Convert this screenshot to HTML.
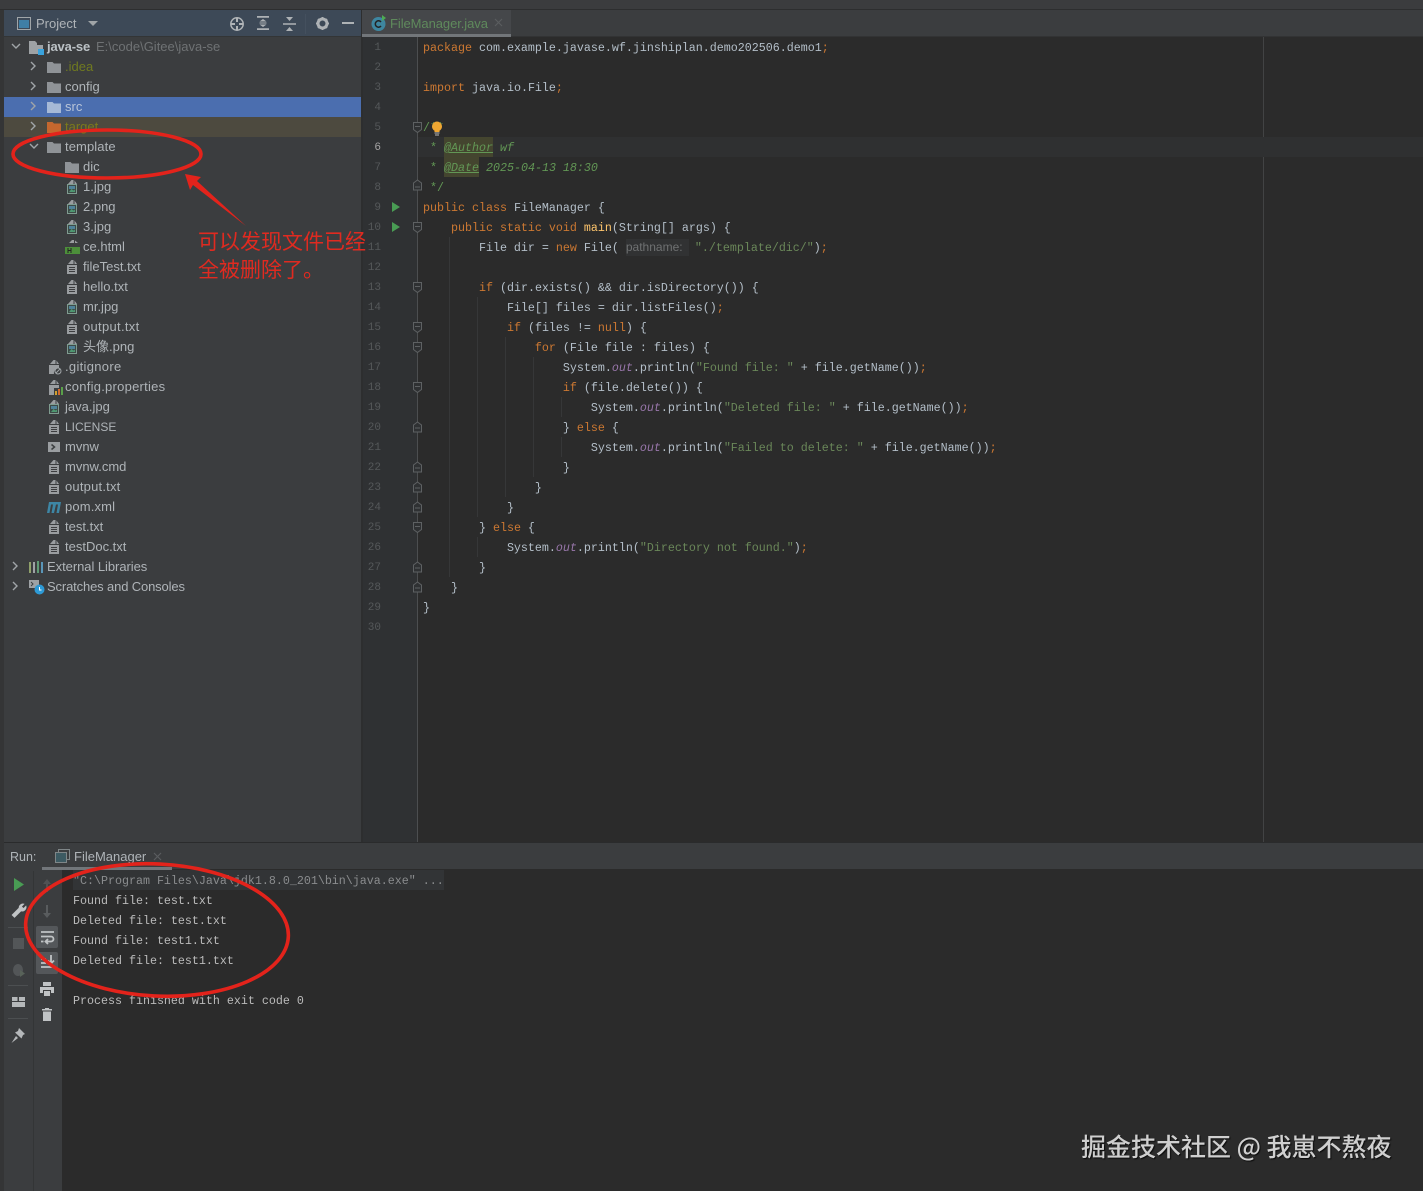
<!DOCTYPE html>
<html><head><meta charset="utf-8"><style>
html,body{margin:0;padding:0;background:#2b2b2b}
#r{position:relative;width:1423px;height:1191px;overflow:hidden;background:#2b2b2b}
.a{position:absolute}
.t{position:absolute;font:13px/20px "Liberation Sans","Noto Sans CJK SC",sans-serif;color:#afb4b8;white-space:pre;height:20px}
.c{position:absolute;left:423px;margin-top:1px;font:11.67px/20px "Liberation Mono",monospace;color:#b4bfc9;white-space:pre;height:20px}
.n{position:absolute;left:363px;margin-top:1px;width:18px;text-align:right;font:11px/20px "Liberation Mono",monospace;color:#55585a;height:20px}
.o{position:absolute;left:73px;margin-top:1px;font:11.67px/20px "Liberation Mono",monospace;color:#bbbbbb;white-space:pre;height:20px}
i{font-style:italic}
.k{color:#cc7832}.s{color:#6a8759}.d{color:#629755}.f{color:#9876aa;font-style:italic}.m{color:#ffc66d}
.g{position:absolute;width:1px;background:#363738}
svg{position:absolute;overflow:visible}
</style></head><body><div id="r">
<svg width="0" height="0" style="left:0;top:0"><defs>
<symbol id="fo" viewBox="0 0 14 12"><path d="M0 1h5.500l1.500 1.500H14V12H0z" fill="#8f9397"/></symbol>
<symbol id="fi" viewBox="0 0 10 14"><path d="M1 4L4.500 0H6.500V4zM7.500 .5L10 4H7.500zM0 5h10v9H0z" fill="#9a9da0"/><path d="M2 7.500h6M2 9.500h6M2 11.500h6" stroke="#3c3d3f" stroke-width="1"/></symbol>
<symbol id="im" viewBox="0 0 10 14"><path d="M1 4L4.500 0H6.500V4zM7.500 .5L10 4H7.500z" fill="#9a9da0"/><rect x=".5" y="4.500" width="9" height="9" fill="#3d4a47" stroke="#7f9c90"/><rect x="2" y="6" width="6" height="3" fill="#4f8299"/><path d="M2 12l2.500-3 2 1.500L8 9.500V12z" fill="#4f9a72"/></symbol>
</defs></svg>

<!-- chrome -->
<div class="a" style="left:0;top:0;width:1423px;height:9px;background:#3b3c3e"></div>
<div class="a" style="left:0;top:9px;width:1423px;height:1px;background:#2d2e2f"></div>
<div class="a" style="left:0;top:10px;width:4px;height:1181px;background:#343536"></div>
<div class="a" style="left:4px;top:10px;width:357px;height:832px;background:#3b3d3f"></div>
<div class="a" style="left:4px;top:10px;width:357px;height:26px;background:#3d4957"></div>
<div class="a" style="left:361px;top:10px;width:2px;height:832px;background:#2d2e2f"></div>
<div class="a" style="left:363px;top:10px;width:1060px;height:27px;background:#3b3d3f"></div>
<div class="a" style="left:4px;top:36px;width:357px;height:1px;background:#333536"></div>
<div class="a" style="left:363px;top:36px;width:1060px;height:1px;background:#323334"></div>
<div class="a" style="left:363px;top:37px;width:54px;height:805px;background:#2f3133"></div>
<div class="a" style="left:417px;top:37px;width:1px;height:805px;background:#4c4e50"></div>
<div class="a" style="left:1263px;top:37px;width:1px;height:805px;background:#424344"></div>
<div class="a" style="left:418px;top:137px;width:1005px;height:20px;background:#2f3031"></div>

<!-- project header -->
<svg style="left:17px;top:17px" width="14" height="13"><rect x=".5" y=".5" width="13" height="12" fill="none" stroke="#a0a5a8"/><rect x="2" y="3" width="10" height="8" fill="#3f7fa6"/></svg>
<div class="t" style="left:36px;top:14px">Project</div>
<svg style="left:88px;top:21px" width="10" height="6"><path d="M0 0h10L5 5z" fill="#a0a5a8"/></svg>
<svg style="left:230px;top:17px" width="14" height="14" fill="none" stroke="#b0b4b7" stroke-width="1.500"><circle cx="7" cy="7" r="6.200"/><path d="M7 1v4M7 9v4M1 7h4M9 7h4" stroke-width="2"/></svg>
<svg style="left:257px;top:16px" width="12" height="14" fill="#aeb2b5"><path d="M0 0h12v1.800H0zM0 12.200h12V14H0zM2.500 5.500L6 3l3.500 2.500zM2.500 8.500L6 11l3.500-2.500zM2.500 6.500h7v1h-7z"/></svg>
<svg style="left:283px;top:17px" width="13" height="14" fill="#aeb2b5"><path d="M0 6.300h13v1.500H0zM3 0h7L6.500 4zM3 14h7L6.500 10z"/></svg>
<div class="a" style="left:305px;top:14px;width:1px;height:20px;background:#44505e"></div>
<svg style="left:316px;top:17px" width="13" height="13"><circle cx="6.500" cy="6.500" r="4.500" fill="none" stroke="#aeb2b5" stroke-width="3"/><path d="M6.500 0v13M0 6.500h13M2 2l9 9M11 2l-9 9" stroke="#aeb2b5" stroke-width="1.800" stroke-dasharray="2 9"/></svg>
<div class="a" style="left:342px;top:22px;width:12px;height:2px;background:#aeb2b5"></div>

<!-- selection rows -->
<div class="a" style="left:4px;top:97px;width:357px;height:20px;background:#4b6eaf"></div>
<div class="a" style="left:4px;top:117px;width:357px;height:20px;background:#4d4a3f"></div>

<!-- tree arrows -->
<svg style="left:0;top:0" width="60" height="600" fill="none" stroke="#a0a5a8" stroke-width="1.400">
<path d="M12 44l4 4 4-4M31 62l4 4-4 4M31 82l4 4-4 4M31 102l4 4-4 4M31 122l4 4-4 4M30 144l4 4 4-4M13 562l4 4-4 4M13 582l4 4-4 4"/>
</svg>

<!-- tree icons -->
<svg style="left:29px;top:41px" width="16" height="14"><path d="M0 0h6l2 2v2h6v9H0z" fill="#9ea2a5"/><rect x="9" y="8" width="6" height="6" fill="#3aa3dd"/></svg>
<svg style="left:47px;top:61px" width="14" height="12"><use href="#fo"/></svg>
<svg style="left:47px;top:81px" width="14" height="12"><use href="#fo"/></svg>
<svg style="left:47px;top:101px" width="14" height="12"><path d="M0 1h5.500L7 2.500H14V12H0z" fill="#a6b9d6"/></svg>
<svg style="left:47px;top:121px" width="14" height="12"><path d="M0 1h5.500L7 2.500H14V12H0z" fill="#c4672e"/></svg>
<svg style="left:47px;top:141px" width="14" height="12"><use href="#fo"/></svg>
<svg style="left:65px;top:161px" width="14" height="12"><use href="#fo"/></svg>
<svg style="left:67px;top:180px" width="10" height="14"><use href="#im"/></svg>
<svg style="left:67px;top:200px" width="10" height="14"><use href="#im"/></svg>
<svg style="left:67px;top:220px" width="10" height="14"><use href="#im"/></svg>
<svg style="left:65px;top:240px" width="15" height="14"><path d="M4 3L7 0h2v3zM10 .5L13 3h-3z" fill="#9a9da0"/><rect y="7" width="15" height="7" fill="#4c8f3a"/><path d="M3 8v5M6 8v5M3 10.500h3" stroke="#222" stroke-width="1"/></svg>
<svg style="left:67px;top:260px" width="10" height="14"><use href="#fi"/></svg>
<svg style="left:67px;top:280px" width="10" height="14"><use href="#fi"/></svg>
<svg style="left:67px;top:300px" width="10" height="14"><use href="#im"/></svg>
<svg style="left:67px;top:320px" width="10" height="14"><use href="#fi"/></svg>
<svg style="left:67px;top:340px" width="10" height="14"><use href="#im"/></svg>
<svg style="left:49px;top:360px" width="13" height="15"><path d="M1 4L4.500 0H6.500V4zM7.500 .5L10 4H7.500zM0 5h10v3a5 5 0 0 0-5 6H0z" fill="#9a9da0"/><circle cx="9" cy="11" r="3" fill="none" stroke="#a0a5a8"/><path d="M7 13l4-4" stroke="#a0a5a8"/></svg>
<svg style="left:49px;top:380px" width="14" height="15"><path d="M1 4L4.500 0H6.500V4zM7.500 .5L10 4H7.500zM0 5h10v3H5v7H0z" fill="#9a9da0"/><rect x="6" y="11" width="2" height="4" fill="#d0a030"/><rect x="9" y="9" width="2" height="6" fill="#d06a30"/><rect x="12" y="7" width="2" height="8" fill="#5aa04a"/></svg>
<svg style="left:49px;top:400px" width="10" height="14"><use href="#im"/></svg>
<svg style="left:49px;top:420px" width="10" height="14"><use href="#fi"/></svg>
<svg style="left:48px;top:441px" width="12" height="12"><rect width="12" height="10" y="1" fill="#9a9ea1"/><path d="M3.500 3.500l3 2.500-3 2.500" fill="none" stroke="#3c3f41" stroke-width="1.500"/></svg>
<svg style="left:49px;top:460px" width="10" height="14"><use href="#fi"/></svg>
<svg style="left:49px;top:480px" width="10" height="14"><use href="#fi"/></svg>
<svg style="left:47px;top:501px" width="15" height="12"><path d="M2 1h12l-2 11h-2.500l1.500-8.500h-2L7 12H4.500L6 3.500H4L2.500 12H0z" fill="#3d86a5"/></svg>
<svg style="left:49px;top:520px" width="10" height="14"><use href="#fi"/></svg>
<svg style="left:49px;top:540px" width="10" height="14"><use href="#fi"/></svg>
<svg style="left:29px;top:561px" width="15" height="12"><path d="M0 1h2v11H0z" fill="#8fa06a"/><path d="M4 1h2v11H4z" fill="#9ea2a5"/><path d="M8 0h2v12H8z" fill="#5f9a74"/><path d="M12 1h2v11h-2z" fill="#5a96b8"/></svg>
<svg style="left:29px;top:580px" width="16" height="15"><rect width="10" height="8" fill="#9ea2a5"/><path d="M2 2l2 2-2 2" stroke="#3c3f41" fill="none"/><circle cx="10.500" cy="9.500" r="5" fill="#2d9ad6"/><path d="M10.500 7v3h2" stroke="#fff" fill="none"/></svg>

<!-- tree text -->
<div class="t" style="left:47px;top:37px;font-weight:bold;color:#bcc2c6;letter-spacing:-.15px">java-se</div>
<div class="t" style="left:96px;top:37px;color:#6f7274">E:\code\Gitee\java-se</div>
<div class="t" style="left:65px;top:57px;color:#707a20">.idea</div>
<div class="t" style="left:65px;top:77px">config</div>
<div class="t" style="left:65px;top:97px;color:#b7c4d8">src</div>
<div class="t" style="left:65px;top:117px;color:#7b7a1c">target</div>
<div class="t" style="left:65px;top:137px;letter-spacing:.1px">template</div>
<div class="t" style="left:83px;top:157px">dic</div>
<div class="t" style="left:83px;top:177px">1.jpg</div>
<div class="t" style="left:83px;top:197px">2.png</div>
<div class="t" style="left:83px;top:217px">3.jpg</div>
<div class="t" style="left:83px;top:237px">ce.html</div>
<div class="t" style="left:83px;top:257px">fileTest.txt</div>
<div class="t" style="left:83px;top:277px">hello.txt</div>
<div class="t" style="left:83px;top:297px">mr.jpg</div>
<div class="t" style="left:83px;top:317px;letter-spacing:.3px">output.txt</div>
<div class="t" style="left:83px;top:337px">头像.png</div>
<div class="t" style="left:65px;top:357px;letter-spacing:.3px">.gitignore</div>
<div class="t" style="left:65px;top:377px;letter-spacing:.25px">config.properties</div>
<div class="t" style="left:65px;top:397px">java.jpg</div>
<div class="t" style="left:65px;top:417px;font-size:12px">LICENSE</div>
<div class="t" style="left:65px;top:437px">mvnw</div>
<div class="t" style="left:65px;top:457px">mvnw.cmd</div>
<div class="t" style="left:65px;top:477px;letter-spacing:.2px">output.txt</div>
<div class="t" style="left:65px;top:497px;letter-spacing:.15px">pom.xml</div>
<div class="t" style="left:65px;top:517px">test.txt</div>
<div class="t" style="left:65px;top:537px">testDoc.txt</div>
<div class="t" style="left:47px;top:557px;letter-spacing:-.05px">External Libraries</div>
<div class="t" style="left:47px;top:577px;letter-spacing:-.14px">Scratches and Consoles</div>

<!-- editor tab -->
<div class="a" style="left:362px;top:10px;width:149px;height:27px;background:#45474a"></div>
<div class="a" style="left:362px;top:34px;width:149px;height:3px;background:#72767a"></div>
<svg style="left:371px;top:15px" width="16" height="16"><circle cx="7.500" cy="9" r="7" fill="#3e86a0"/><path d="M10 7a3.200 3.200 0 1 0 0 4" fill="none" stroke="#222" stroke-width="1.500"/><path d="M11 0l4 3-4 3z" fill="#4eab52"/></svg>
<div class="t" style="left:390px;top:14px;color:#5f8a5c;letter-spacing:-.07px">FileManager.java</div>
<svg style="left:495px;top:19px" width="7" height="7"><path d="M0 0l7 7M7 0L0 7" stroke="#5a5d5f" stroke-width="1.200"/></svg>

<!-- indent guides -->
<div class="g" style="left:449px;top:237px;height:340px"></div>
<div class="g" style="left:477px;top:297px;height:220px"></div>
<div class="g" style="left:477px;top:537px;height:20px"></div>
<div class="g" style="left:505px;top:337px;height:160px"></div>
<div class="g" style="left:533px;top:357px;height:120px"></div>
<div class="g" style="left:561px;top:397px;height:20px"></div>
<div class="g" style="left:561px;top:437px;height:20px"></div>

<!-- line numbers -->
<div class="n" style="top:37px">1</div><div class="n" style="top:57px">2</div><div class="n" style="top:77px">3</div><div class="n" style="top:97px">4</div><div class="n" style="top:117px">5</div><div class="n" style="top:137px;color:#a4a3a3">6</div><div class="n" style="top:157px">7</div><div class="n" style="top:177px">8</div><div class="n" style="top:197px">9</div><div class="n" style="top:217px">10</div><div class="n" style="top:237px">11</div><div class="n" style="top:257px">12</div><div class="n" style="top:277px">13</div><div class="n" style="top:297px">14</div><div class="n" style="top:317px">15</div><div class="n" style="top:337px">16</div><div class="n" style="top:357px">17</div><div class="n" style="top:377px">18</div><div class="n" style="top:397px">19</div><div class="n" style="top:417px">20</div><div class="n" style="top:437px">21</div><div class="n" style="top:457px">22</div><div class="n" style="top:477px">23</div><div class="n" style="top:497px">24</div><div class="n" style="top:517px">25</div><div class="n" style="top:537px">26</div><div class="n" style="top:557px">27</div><div class="n" style="top:577px">28</div><div class="n" style="top:597px">29</div><div class="n" style="top:617px">30</div>

<!-- run markers -->
<svg style="left:392px;top:202px" width="8" height="10"><path d="M0 0l8 5-8 5z" fill="#499c54"/></svg>
<svg style="left:392px;top:222px" width="8" height="10"><path d="M0 0l8 5-8 5z" fill="#499c54"/></svg>

<!-- fold markers -->
<svg style="left:413px;top:0" width="9" height="620" fill="#2f3133" stroke="#5e6163" stroke-width="1">
<path d="M.5 122.500h8v7l-4 3-4-3zM2 126.500h5"/><path d="M.5 190v-7l4-3 4 3v7zM2 187h5"/>
<path d="M.5 222.500h8v7l-4 3-4-3zM2 226.500h5"/>
<path d="M.5 282.500h8v7l-4 3-4-3zM2 286.500h5"/>
<path d="M.5 322.500h8v7l-4 3-4-3zM2 326.500h5"/>
<path d="M.5 342.500h8v7l-4 3-4-3zM2 346.500h5"/>
<path d="M.5 382.500h8v7l-4 3-4-3zM2 386.500h5"/>
<path d="M.5 432v-7l4-3 4 3v7zM2 428h5"/>
<path d="M.5 472v-7l4-3 4 3v7zM2 468h5"/>
<path d="M.5 492v-7l4-3 4 3v7zM2 488h5"/>
<path d="M.5 512v-7l4-3 4 3v7zM2 508h5"/>
<path d="M.5 522.500h8v7l-4 3-4-3zM2 526.500h5"/>
<path d="M.5 572v-7l4-3 4 3v7zM2 568h5"/>
<path d="M.5 592v-7l4-3 4 3v7zM2 588h5"/>
</svg>

<!-- doc highlights -->
<div class="a" style="left:444px;top:137px;width:49px;height:20px;background:#44452f"></div>
<div class="a" style="left:444px;top:157px;width:35px;height:20px;background:#44452f"></div>
<div class="a" style="left:626px;top:239px;width:63px;height:17px;background:#313233"></div>

<!-- code -->
<div class="c" style="top:37px"><span class="k">package</span> com.example.javase.wf.jinshiplan.demo202506.demo1<span class="k">;</span></div>
<div class="c" style="top:77px"><span class="k">import</span> java.io.File<span class="k">;</span></div>
<div class="c" style="top:117px;color:#629755">/**</div>
<div class="c d" style="top:137px"> * <i style="text-decoration:underline">@Author</i> <i>wf</i></div>
<div class="c d" style="top:157px"> * <i style="text-decoration:underline">@Date</i> <i>2025-04-13 18:30</i></div>
<div class="c d" style="top:177px"> */</div>
<div class="c" style="top:197px"><span class="k">public class</span> FileManager {</div>
<div class="c" style="top:217px">    <span class="k">public static void</span> <span class="m">main</span>(String[] args) {</div>
<div class="c" style="top:237px">        File dir = <span class="k">new</span> File( <span style="display:inline-block;width:62px;vertical-align:top;line-height:19px;color:#6f7172;font-family:'Liberation Sans',sans-serif;font-size:12px">pathname:</span> <span class="s">"./template/dic/"</span>)<span class="k">;</span></div>
<div class="c" style="top:277px">        <span class="k">if</span> (dir.exists() &amp;&amp; dir.isDirectory()) {</div>
<div class="c" style="top:297px">            File[] files = dir.listFiles()<span class="k">;</span></div>
<div class="c" style="top:317px">            <span class="k">if</span> (files != <span class="k">null</span>) {</div>
<div class="c" style="top:337px">                <span class="k">for</span> (File file : files) {</div>
<div class="c" style="top:357px">                    System.<span class="f">out</span>.println(<span class="s">"Found file: "</span> + file.getName())<span class="k">;</span></div>
<div class="c" style="top:377px">                    <span class="k">if</span> (file.delete()) {</div>
<div class="c" style="top:397px">                        System.<span class="f">out</span>.println(<span class="s">"Deleted file: "</span> + file.getName())<span class="k">;</span></div>
<div class="c" style="top:417px">                    } <span class="k">else</span> {</div>
<div class="c" style="top:437px">                        System.<span class="f">out</span>.println(<span class="s">"Failed to delete: "</span> + file.getName())<span class="k">;</span></div>
<div class="c" style="top:457px">                    }</div>
<div class="c" style="top:477px">                }</div>
<div class="c" style="top:497px">            }</div>
<div class="c" style="top:517px">        } <span class="k">else</span> {</div>
<div class="c" style="top:537px">            System.<span class="f">out</span>.println(<span class="s">"Directory not found."</span>)<span class="k">;</span></div>
<div class="c" style="top:557px">        }</div>
<div class="c" style="top:577px">    }</div>
<div class="c" style="top:597px">}</div>

<!-- bulb -->
<svg style="left:431px;top:121px" width="12" height="15"><circle cx="6" cy="5.500" r="5" fill="#f0a732"/><path d="M3.500 9h5v2h-5z" fill="#f0a732"/><path d="M3.500 12h5M4 14h4" stroke="#bbb" stroke-width="1"/></svg>

<!-- run panel -->
<div class="a" style="left:4px;top:842px;width:1419px;height:1px;background:#2a2b2c"></div>
<div class="a" style="left:4px;top:843px;width:1419px;height:26px;background:#3b3d3f"></div>
<div class="a" style="left:4px;top:869px;width:58px;height:322px;background:#3b3d3f"></div>
<div class="a" style="left:33px;top:871px;width:1px;height:320px;background:#333536"></div>
<div class="a" style="left:62px;top:869px;width:1361px;height:322px;background:#2b2b2b"></div>
<div class="t" style="left:10px;top:847px;font-size:12.500px">Run:</div>
<svg style="left:55px;top:849px" width="15" height="14" fill="none"><rect x="3.500" y=".5" width="11" height="10" stroke="#7f8688"/><rect x=".5" y="3.500" width="11" height="10" fill="#3c5a62" stroke="#7f8688"/></svg>
<div class="t" style="left:74px;top:847px">FileManager</div>
<svg style="left:154px;top:853px" width="7" height="7"><path d="M0 0l7 7M7 0L0 7" stroke="#5a5d5f" stroke-width="1.200"/></svg>
<div class="a" style="left:42px;top:867px;width:130px;height:3px;background:#72767a"></div>

<!-- run toolbar -->
<svg style="left:14px;top:878px" width="10" height="13"><path d="M0 0l10 6.500L0 13z" fill="#499c54"/></svg>
<svg style="left:11px;top:903px" width="15" height="15"><path d="M1 12l7-7a4 4 0 0 1 5-4l-2.500 2.500 2 2L15 3a4 4 0 0 1-5 5l-6.500 6.500z" fill="#c0c3c5" stroke="#c0c3c5" stroke-width=".6"/></svg>
<div class="a" style="left:8px;top:927px;width:20px;height:1px;background:#4c4f51"></div>
<div class="a" style="left:13px;top:938px;width:11px;height:11px;background:#535658"></div>
<svg style="left:11px;top:962px" width="16" height="15"><ellipse cx="7" cy="8" rx="5" ry="6" fill="#535658"/><path d="M9 8l5 3.500L9 15z" fill="#586259"/></svg>
<div class="a" style="left:8px;top:985px;width:20px;height:1px;background:#4c4f51"></div>
<svg style="left:12px;top:997px" width="13" height="10" fill="#b5b8ba"><path d="M0 0h5.500v4H0zM7 0h6v4H7zM0 5h13v5H0z"/></svg>
<div class="a" style="left:8px;top:1018px;width:20px;height:1px;background:#4c4f51"></div>
<svg style="left:11px;top:1028px" width="14" height="15"><path d="M8 0l6 6-2 1-1.500 3.500L4 4.500 7 3zM5 8l2 2-6.500 5z" fill="#b5b8ba"/></svg>

<svg style="left:42px;top:879px" width="10" height="13"><path d="M5 0l4 5H6v8H4V5H1z" fill="#505254"/></svg>
<svg style="left:42px;top:905px" width="10" height="13"><path d="M5 13l4-5H6V0H4v8H1z" fill="#595c5e"/></svg>
<div class="a" style="left:36px;top:926px;width:22px;height:22px;background:#54575a;border-radius:2px"></div>
<svg style="left:40px;top:931px" width="15" height="13" fill="none" stroke="#c0c3c5" stroke-width="1.800"><path d="M1 1h13M1 5.500h10a2.500 2.500 0 0 1 0 5H6M8 8l-2.500 2.500L8 13M1 10.500h2.500"/></svg>
<div class="a" style="left:36px;top:952px;width:22px;height:22px;background:#54575a;border-radius:2px"></div>
<svg style="left:41px;top:955px" width="14" height="14" fill="none" stroke="#c0c3c5" stroke-width="1.800"><path d="M10 0v8M7 5.500l3 3 3-3M0 4h5M0 8h5M0 12h14"/></svg>
<svg style="left:40px;top:982px" width="14" height="15"><path d="M3 0h8v4H3zM0 5h14v6h-3V8H3v3H0zM4 9h6v5H4z" fill="#c0c3c5"/></svg>
<svg style="left:42px;top:1008px" width="10" height="13"><path d="M3 0h4v1h3v1.500H0V1h3zM1 3.500h8V13H1z" fill="#c0c3c5"/></svg>

<!-- console -->
<div class="a" style="left:73px;top:870px;width:371px;height:20px;background:#323436"></div>
<div class="o" style="top:870px;color:#8a8c8e">"C:\Program Files\Java\jdk1.8.0_201\bin\java.exe" ...</div>
<div class="o" style="top:890px">Found file: test.txt</div>
<div class="o" style="top:910px">Deleted file: test.txt</div>
<div class="o" style="top:930px">Found file: test1.txt</div>
<div class="o" style="top:950px">Deleted file: test1.txt</div>
<div class="o" style="top:990px">Process finished with exit code 0</div>

<!-- annotations -->
<svg style="left:0;top:0;pointer-events:none" width="1423" height="1191" fill="none" stroke="#e3231b" stroke-width="3.600">
<ellipse cx="107" cy="154" rx="94" ry="24"/>
<ellipse cx="157" cy="930" rx="131.500" ry="66" transform="rotate(3 157 930)"/>
<path d="M185 174L201 177L197 181L246 226L193 185L190 190Z" fill="#e3231b" stroke="none"/>
</svg>
<div class="a" style="left:198px;top:227px;font:400 21px/28px 'Noto Sans CJK SC',sans-serif;color:#e02a20;white-space:pre">可以发现文件已经
全被删除了。</div>
<div class="a" style="left:1081px;top:1128px;font:500 25px/36px 'Noto Sans CJK SC',sans-serif;color:#cfcfcf;white-space:pre;text-shadow:1px 1px 1px #0c0c0c">掘金技术社区 @ 我崽不熬夜</div>
</div></body></html>
